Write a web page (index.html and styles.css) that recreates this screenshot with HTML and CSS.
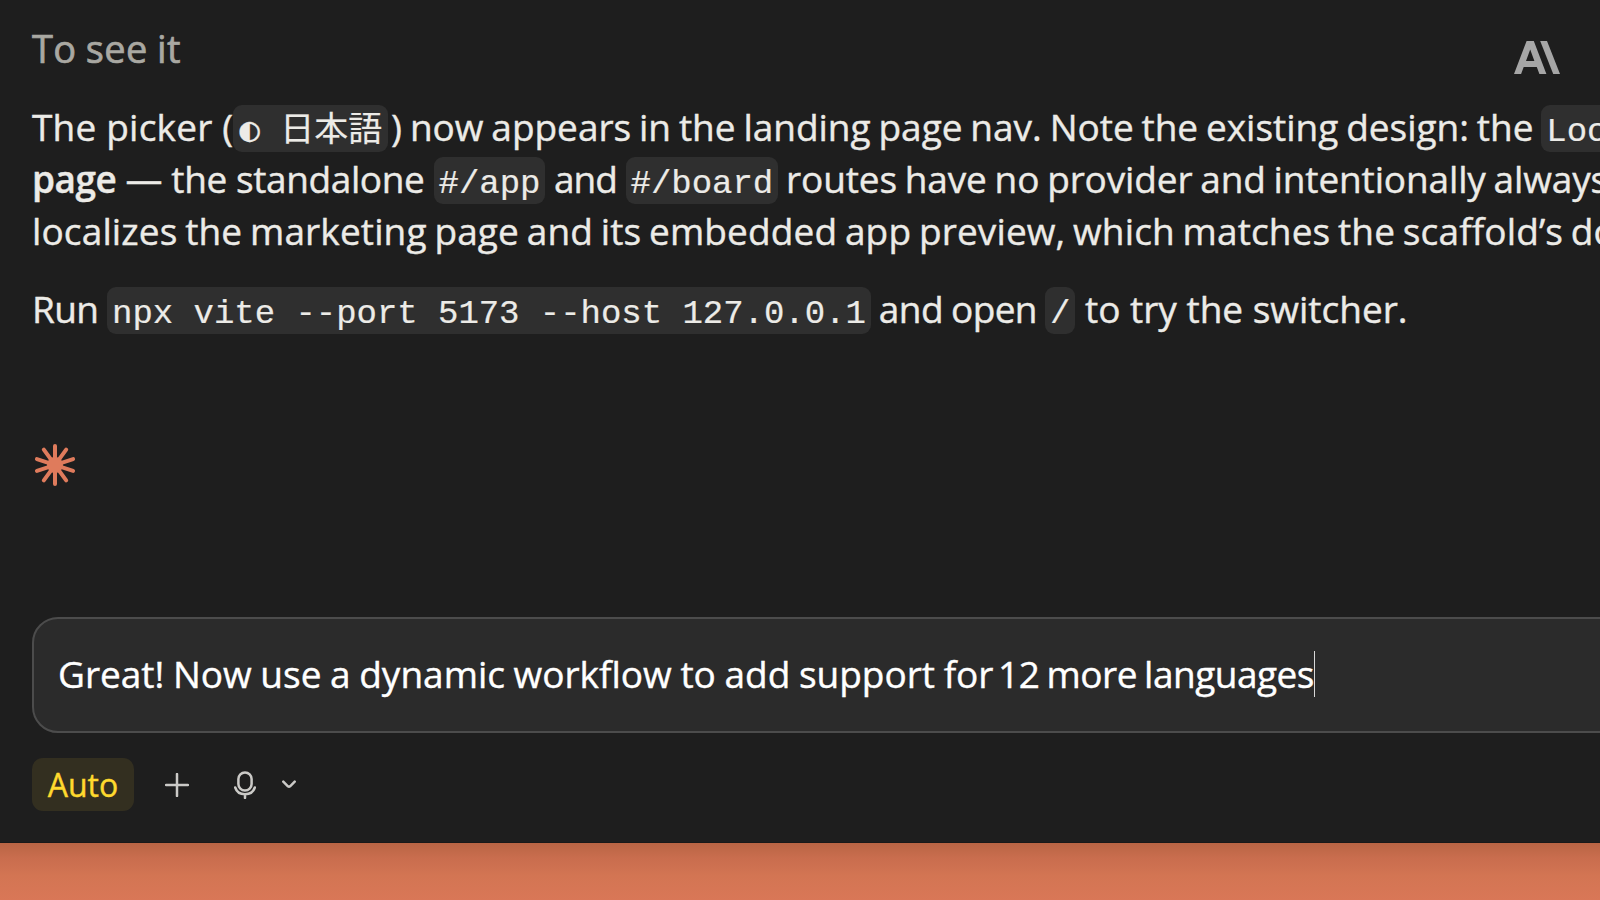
FILE: index.html
```
<!DOCTYPE html>
<html lang="en">
<head>
    <meta charset="UTF-8">
    <meta name="viewport" content="width=device-width, initial-scale=1.0">
    <title>Session</title>
    <link rel="stylesheet" href="styles.css">
</head>
<body>
    <div class="window">
        <div class="message">
            <h2 class="heading">To see it</h2>
            <div class="paragraph">
                <div class="line"><span class="t-picker">The picker (</span><code class="picker"><span class="half">◐</span> 日本語</code><span class="t-nav">) now appears in the landing page nav. Note the existing design: the </span><code>Loc</code></div>
                <div class="line"><strong>page</strong><span class="t-standalone"> — the standalone </span><code>#/app</code><span class="t-and"> and </span><code>#/board</code><span class="t-routes"> routes have no provider and intentionally always</span></div>
                <div class="line t-localizes">localizes the marketing page and its embedded app preview, which matches the scaffold’s do</div>
            </div>
            <div class="line"><span class="t-run">Run </span><code>npx vite --port 5173 --host 127.0.0.1</code><span class="t-open"> and open </span><code>/</code><span class="t-try"> to try the switcher.</span></div>
        </div>

        <svg class="spark" viewBox="-22 -22 44 44">
            <g stroke="#df7b5c" stroke-width="4" stroke-linecap="round">
                <path d="M0 -19V19"/>
                <path d="M0 -19V19" transform="rotate(36)"/>
                <path d="M0 -19V19" transform="rotate(72)"/>
                <path d="M0 -19V19" transform="rotate(108)"/>
                <path d="M0 -19V19" transform="rotate(144)"/>
            </g>
            <circle r="8" fill="#df7b5c"/>
        </svg>

        <div class="composer">
            <div class="prompt">Great! Now use a dynamic workflow to add support for <span class="t-count">12 more languages</span></div><span class="caret"></span>
        </div>

        <div class="toolbar">
            <span class="mode">Auto</span>
            <svg class="plus" viewBox="0 0 24 24"><path d="M12 1V23M1 12H23"/></svg>
            <svg class="mic" viewBox="0 0 22 28">
                <rect x="4.4" y="1.4" width="13.2" height="18.2" rx="6.6"/>
                <path d="M1.2 16.5C2.6 20.8 6.4 23.2 11 23.2S19.4 20.8 20.8 16.5M11 23.2V27"/>
            </svg>
            <svg class="chevron" viewBox="0 0 14 9"><path d="M1.3 1.7L5.9 6.3Q7 7.2 8.1 6.3L12.7 1.7"/></svg>
        </div>

        <svg class="logo" viewBox="0 0 46 33">
            <path fill-rule="evenodd" d="M0 33L12.6 0H19.8L32.4 33H25.4L22.8 26H9.7L7.1 33ZM12 20H20.4L16.2 8.6Z"/>
            <path d="M26.2 0H33L46 33H39.2Z"/>
        </svg>
    </div>
</body>
</html>
```

FILE: styles.css
```
* {
    box-sizing: border-box;
}
body {
    margin: 0;
    height: 900px;
    overflow: hidden;
    background: linear-gradient(#b96544 843px, #c96d4e 858px, #d37553 876px, #d97757 900px);
    font-family: "Open Sans", "Noto Sans CJK JP", sans-serif;
    font-size: 37px;
    font-variant-ligatures: none;
    color: #ecebe7;
    -webkit-text-stroke: 0.4px currentColor;
}
.window {
    position: relative;
    height: 843px;
    padding: 22px 0 0 32px;
    overflow: hidden;
    background: #1e1e1e;
    border-bottom: 1px solid #191919;
}
.message {
    height: 421px;
    line-height: 52px;
}
.heading {
    margin: 0 0 27px;
    font-size: 38px;
    font-weight: 400;
    letter-spacing: 0.4px;
    word-spacing: -1px;
    -webkit-text-stroke-width: 0.7px;
    color: #a9a8a2;
}
.paragraph {
    margin-bottom: 26px;
}
.line {
    height: 52px;
    white-space: pre;
}
strong {
    font-weight: 600;
    letter-spacing: -0.5px;
}
code {
    padding: 8px 5px 1px;
    border-radius: 9px;
    background: #2f2f2f;
    font-family: "Liberation Mono", "Noto Sans CJK JP", monospace;
    font-size: 34px;
    line-height: 1;
    letter-spacing: -0.03px;
    -webkit-text-stroke-width: 0.2px;
}
.picker {
    padding-left: 6px;
    padding-right: 6px;
}
.half {
    display: inline-block;
    width: 20.4px;
    font-family: "DejaVu Sans Mono", monospace;
}
.t-picker {
    letter-spacing: 0.2px;
}
.t-nav {
    padding-left: 3px;
    letter-spacing: -0.02px;
    word-spacing: -1.7px;
}
.t-standalone {
    letter-spacing: -0.4px;
}
.t-and {
    letter-spacing: -1px;
}
.t-routes {
    letter-spacing: -0.14px;
    word-spacing: -1.6px;
}
.t-localizes {
    letter-spacing: 0.13px;
    word-spacing: -2px;
}
.t-run {
    letter-spacing: -0.7px;
}
.t-open {
    letter-spacing: -0.6px;
    word-spacing: -1px;
}
.t-try {
    letter-spacing: 0;
}
.spark {
    display: block;
    width: 44px;
    height: 44px;
    margin: 0 0 130px 1px;
}
.composer {
    display: flex;
    align-items: center;
    width: 1700px;
    height: 116px;
    padding: 0 0 2px 24px;
    border: 2px solid #4c4c4c;
    border-radius: 26px;
    background: #2b2b2b;
    color: #fff;
}
.prompt {
    margin-bottom: 1px;
    letter-spacing: 0;
    word-spacing: -1px;
    white-space: nowrap;
}
.t-count {
    margin-left: -4px;
    letter-spacing: -0.5px;
    word-spacing: -2px;
}
.caret {
    width: 1px;
    height: 46px;
    background: #d8d8d8;
}
.toolbar {
    display: flex;
    align-items: center;
    margin-top: 25px;
}
.toolbar svg {
    fill: none;
    stroke: #cbcac7;
    stroke-width: 2.5;
    stroke-linecap: round;
}
.mode {
    width: 102px;
    height: 53px;
    border-radius: 11px;
    background: #332f20;
    color: #ffd92e;
    font-size: 32px;
    line-height: 53px;
    text-align: center;
}
.plus {
    width: 24px;
    height: 24px;
    margin-left: 31px;
}
.mic {
    width: 22px;
    height: 28px;
    margin-left: 45px;
}
.chevron {
    width: 14px;
    height: 9px;
    margin-left: 26px;
}
.logo {
    position: absolute;
    top: 41px;
    left: 1514px;
    width: 46px;
    height: 33px;
    fill: #a6a6a6;
}
```
